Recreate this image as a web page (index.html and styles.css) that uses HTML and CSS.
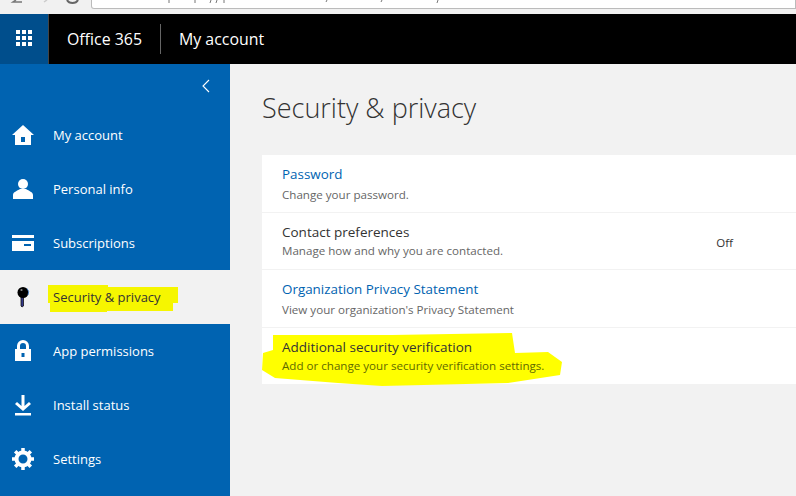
FILE: index.html
```html
<!DOCTYPE html>
<html lang="en">
<head>
<meta charset="utf-8">
<title>Security &amp; privacy</title>
<link rel="stylesheet" href="styles.css">
</head>
<body>
<div class="chrome">
  <svg class="chrome-icons" width="90" height="13" viewBox="0 0 90 13"><path d="M16 0 L13 2 L22 2" fill="none" stroke="#777" stroke-width="1.5"/><path d="M44 2 L47 0" fill="none" stroke="#ccc" stroke-width="1.5"/><path d="M67 0 A6 5 0 0 0 78 0" fill="none" stroke="#666" stroke-width="2"/></svg>
  <div class="address">
    <svg class="ticks" width="400" height="3" viewBox="0 0 400 3"><path d="M77 0 V3 M103 0 V3 M119 0 L118 3 M125 0 L124 3 M132 0 V3 M235 0 L234 2 M290 0 L289 2 M346 0 L345 3" stroke="#777" stroke-width="1" fill="none"/></svg>
  </div>
</div>
<header class="suite">
  <div class="waffle">
    <svg width="16" height="16" viewBox="0 0 16 16" fill="#fff"><rect x="0" y="0" width="4" height="4"/><rect x="6" y="0" width="4" height="4"/><rect x="12" y="0" width="4" height="4"/><rect x="0" y="6" width="4" height="4"/><rect x="6" y="6" width="4" height="4"/><rect x="12" y="6" width="4" height="4"/><rect x="0" y="12" width="4" height="4"/><rect x="6" y="12" width="4" height="4"/><rect x="12" y="12" width="4" height="4"/></svg>
  </div>
  <div class="brand">Office 365</div>
  <div class="app">My account</div>
</header>
<div class="body">
  <nav class="side">
    <div class="collapse"><svg width="9" height="14" viewBox="0 0 9 14"><path d="M8 1 L2 7 L8 13" fill="none" stroke="#fff" stroke-width="1.1"/></svg></div>
    <a class="item"><svg class="ico" viewBox="0 0 22 22" fill="#fff"><path d="M11 1 L22 11 L19 11 L19 21 L3 21 L3 11 L0 11 Z M9 13 V18 H13 V13 Z" fill-rule="evenodd"/></svg><span>My account</span></a>
    <a class="item"><svg class="ico" viewBox="0 0 22 22" fill="#fff"><circle cx="11" cy="6" r="5"/><path d="M1 21 V17 C1 14 5 13 8 11 H14 C17 13 21 14 21 17 V21 Z"/></svg><span>Personal info</span></a>
    <a class="item"><svg class="ico" viewBox="0 0 22 22" fill="#fff"><path d="M0 3 H22 V6 H0 Z M0 9 H22 V19 H0 Z M12 12 V14 H19 V12 Z" fill-rule="evenodd"/></svg><span>Subscriptions</span></a>
    <a class="item active"><svg class="ico" viewBox="0 0 22 22"><path d="M11.500 10 V20 L10 21 L9 20 V10 Z" fill="#33378a" stroke="#111" stroke-width="0.8"/><ellipse cx="11" cy="6.500" rx="5.500" ry="5.500" fill="#000"/><path d="M15 2.500 A5.500 5.500 0 0 1 16 9" fill="none" stroke="#3a78c8" stroke-width="0.8"/><circle cx="9.500" cy="4" r="1.100" fill="#888"/></svg><span>Security &amp; privacy</span>
      <svg class="mark mark-nav" viewBox="0 0 130 27"><path d="M0 0 H60 V2 H130 V18 H125 V26 H59 V27 H2 V18 H0 Z" fill="#f6f600"/></svg>
    </a>
    <a class="item"><svg class="ico" viewBox="0 0 22 22" fill="#fff"><path d="M3 21 V9 H5 V6 A6 6 0 0 1 17 6 V9 H19 V21 Z M8 9 H14 V6 A3 3 0 0 0 8 6 Z M9.500 13 V17 H12.500 V13 Z" fill-rule="evenodd"/></svg><span>App permissions</span></a>
    <a class="item"><svg class="ico" viewBox="0 0 22 22" fill="#fff"><path d="M9.500 1 H12.500 V12 L17 8 L19 10 L11 17 L3 10 L5 8 L9.500 12 Z"/><rect x="3" y="19" width="16" height="2.500"/></svg><span>Install status</span></a>
    <a class="item"><svg class="ico" viewBox="0 0 22 22"><circle cx="11" cy="11" r="6.500" fill="none" stroke="#fff" stroke-width="4"/><g stroke="#fff" stroke-width="3.500"><path d="M11 0 V4 M11 18 V22 M0 11 H4 M18 11 H22 M3.200 3.200 L6 6 M16 16 L18.800 18.800 M3.200 18.800 L6 16 M16 6 L18.800 3.200"/></g></svg><span>Settings</span></a>
  </nav>
  <main class="main">
    <h1 class="title">Security &amp; privacy</h1>
    <section class="card">
      <div class="row">
        <a class="link">Password</a>
        <p class="desc">Change your password.</p>
      </div>
      <div class="row row-status">
        <div>
          <div class="name">Contact preferences</div>
          <p class="desc">Manage how and why you are contacted.</p>
        </div>
        <span class="status">Off</span>
      </div>
      <div class="row">
        <a class="link">Organization Privacy Statement</a>
        <p class="desc">View your organization's Privacy Statement</p>
      </div>
      <div class="row last">
        <svg class="mark mark-row" viewBox="0 0 302 55"><path d="M11 3 L130 3 L250 1 L253 21 L286 20 L300 30 L298 43 L246 51 L120 54 L76 51 L13 46 L0 38 L1 21 L11 18 Z" fill="#ffff00"/></svg>
        <div class="name on-mark">Additional security verification</div>
        <p class="desc on-mark">Add or change your security verification settings.</p>
      </div>
    </section>
  </main>
</div>
</body>
</html>
```
FILE: styles.css
```css
* { box-sizing: border-box; }
html, body { margin: 0; height: 100%; overflow: hidden; }
body { font-family: "Open Sans", "Noto Sans", sans-serif; background: #f2f2f2; color: #333; display: flex; flex-direction: column; }
.chrome { height: 14px; background: #f1f1f1; display: flex; align-items: flex-start; flex: none; }
.chrome-icons { flex: none; width: 90px; height: 13px; }
.address { flex: 1; height: 9px; background: #fff; border: 1px solid #bbb; border-top: 0; border-radius: 0 0 0 3px; margin-left: 1px; overflow: hidden; }
.ticks { display: block; }
.suite { height: 50px; flex: none; background: #000; color: #fff; display: flex; align-items: stretch; }
.waffle { width: 49px; background: #004e8c; border-right: 1px solid #444; display: flex; align-items: center; justify-content: center; padding: 0 1px 2px 0; }
.brand { font-size: 15.900px; display: flex; align-items: center; padding: 0 19px 0 18px; position: relative; }
.brand::after { content: ""; position: absolute; right: 0; top: 10px; bottom: 10px; width: 1px; background: #666; }
.app { font-size: 15.900px; display: flex; align-items: center; padding-left: 18px; }
.body { flex: 1; display: flex; min-height: 0; }
.side { width: 230px; flex: none; background: #0063b1; color: #fff; }
.collapse { height: 44px; display: flex; justify-content: flex-end; align-items: center; padding: 0 20px 0 0; }
.item { height: 54px; display: flex; align-items: center; padding-left: 12px; font-size: 13px; position: relative; }
.ico { width: 22px; height: 22px; flex: none; margin-right: 19px; }
.item span { position: relative; z-index: 1; }
.active { background: #f2f2f2; color: #333; }
.mark { position: absolute; z-index: 0; }
.mark-nav { left: 48px; top: 15px; width: 130px; height: 27px; }
.main { flex: 1; padding: 0 0 0 32px; min-width: 0; }
.title { font-size: 27px; font-weight: 300; margin: 25px 0 0; height: 66px; line-height: 38px; color: #333; }
.card { background: #fff; }
.row { padding: 9px 20px 0; height: 58px; border-bottom: 1px solid #f2f2f2; position: relative; }
.row.row-status { height: 57px; }
.row.last { border-bottom: 0; height: 56px; }
.row-status { display: flex; justify-content: space-between; padding-right: 63px; }
.link { display: block; font-size: 13.400px; line-height: 20px; color: #0063b1; }
.name { font-size: 13.500px; line-height: 20px; color: #333; }
.desc { font-size: 11.600px; line-height: 16px; margin: 3px 0 0; color: #666; }
.row-status .desc, .last .desc { margin-top: 1px; }
.status { font-size: 11.500px; color: #333; align-self: center; margin-bottom: 6px; }
.on-mark { position: relative; z-index: 1; }
.last .desc { color: #5f6a00; }
.mark-row { left: 0; top: 4px; width: 302px; height: 55px; }
```
